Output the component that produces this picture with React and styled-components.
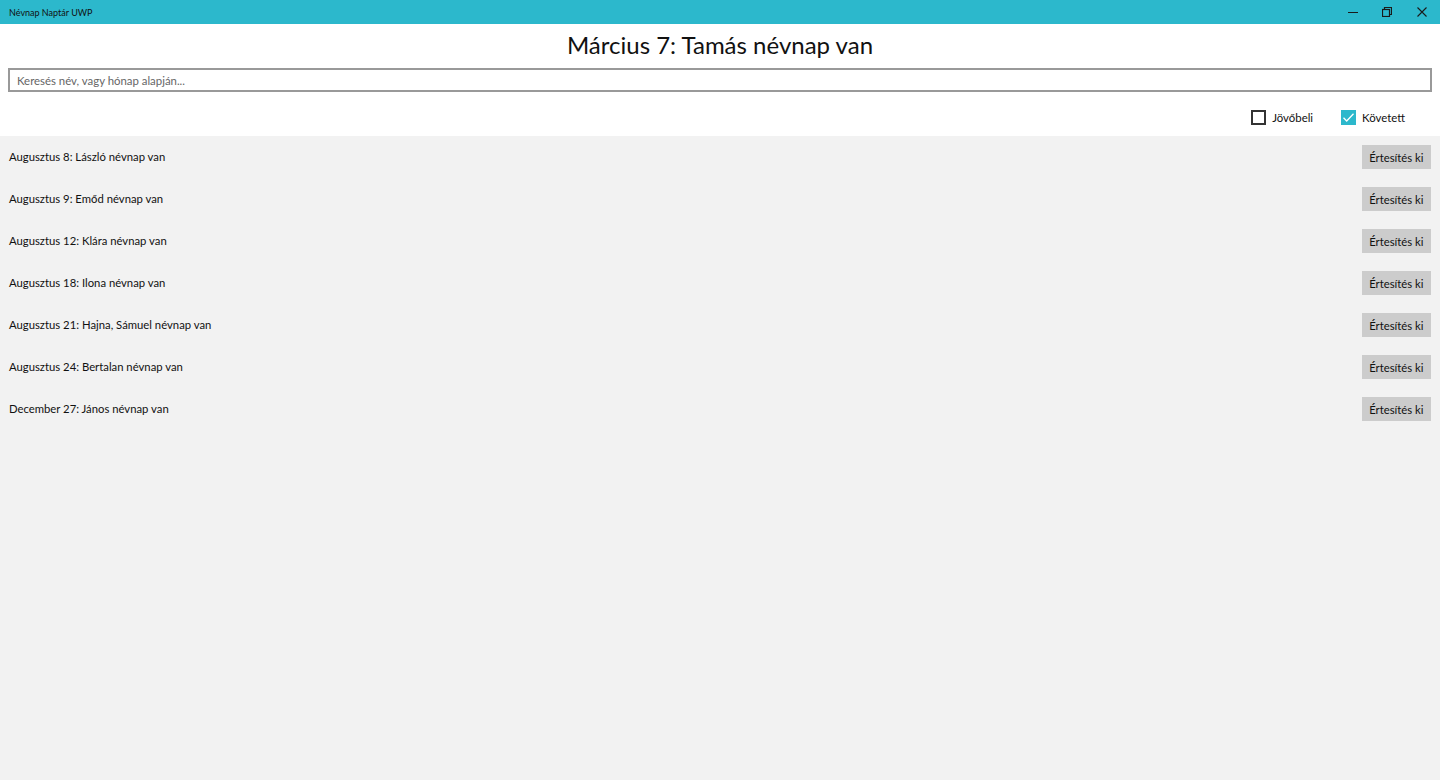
import React from 'react';
import styled, { createGlobalStyle } from 'styled-components';

const GlobalStyle = createGlobalStyle`
  html, body {
    margin: 0;
    padding: 0;
    height: 100%;
  }
  body {
    font-family: Lato, "Noto Sans", sans-serif;
    color: #000;
    overflow: hidden;
  }
  #root {
    height: 100%;
  }
`;

const namedays = [
  'Augusztus 8: László névnap van',
  'Augusztus 9: Emőd névnap van',
  'Augusztus 12: Klára névnap van',
  'Augusztus 18: Ilona névnap van',
  'Augusztus 21: Hajna, Sámuel névnap van',
  'Augusztus 24: Bertalan névnap van',
  'December 27: János névnap van',
];

const App = () => {
  return (
    <Window>
      <GlobalStyle />
      <TitleBar>
        <AppName>Névnap Naptár UWP</AppName>
        <WindowControls>
          <ControlButton aria-label="Minimize">
            <svg width="10" height="10" viewBox="0 0 10 10">
              <path d="M0 5.5h10" stroke="#1a1a1a" strokeWidth="1" />
            </svg>
          </ControlButton>
          <ControlButton aria-label="Restore">
            <svg width="10" height="10" viewBox="0 0 10 10" fill="none">
              <rect x="0.5" y="2.5" width="7" height="7" stroke="#1a1a1a" strokeWidth="1.2" />
              <path d="M2.5 2.5V0.5h7v7h-2" stroke="#1a1a1a" strokeWidth="1.2" />
            </svg>
          </ControlButton>
          <ControlButton aria-label="Close">
            <svg width="10" height="10" viewBox="0 0 10 10">
              <path d="M0.5 0.5l9 9M9.5 0.5l-9 9" stroke="#1a1a1a" strokeWidth="1.1" />
            </svg>
          </ControlButton>
        </WindowControls>
      </TitleBar>

      <Header>
        <Heading>Március 7: Tamás névnap van</Heading>
        <SearchBox placeholder="Keresés név, vagy hónap alapján..." />
        <FilterRow>
          <CheckLabel>
            <CheckBox $checked={false} />
            Jövőbeli
          </CheckLabel>
          <CheckLabel>
            <CheckBox $checked>
              <svg width="13" height="13" viewBox="0 0 13 13" fill="none">
                <path d="M1.5 6.8l3.2 3.2 6.8-7.2" stroke="#fff" strokeWidth="1.3" />
              </svg>
            </CheckBox>
            Követett
          </CheckLabel>
        </FilterRow>
      </Header>

      <List>
        {namedays.map((text) => (
          <Row key={text}>
            <RowText>{text}</RowText>
            <NotifyButton>Értesítés ki</NotifyButton>
          </Row>
        ))}
      </List>
    </Window>
  );
};

const Window = styled.div`
  height: 100%;
  display: flex;
  flex-direction: column;
  background: #f2f2f2;
`;

const TitleBar = styled.div`
  height: 24px;
  flex-shrink: 0;
  display: flex;
  align-items: center;
  justify-content: space-between;
  background: #2cb8cc;
`;

const AppName = styled.div`
  padding-left: 9px;
  font-size: 9px;
  color: #111;
`;

const WindowControls = styled.div`
  display: flex;
  height: 100%;
  padding-right: 1px;
`;

const ControlButton = styled.div`
  width: 34.5px;
  height: 100%;
  display: flex;
  align-items: center;
  justify-content: center;
`;

const Header = styled.div`
  background: #fff;
  display: flex;
  flex-direction: column;
  padding: 0 8px;
`;

const Heading = styled.h1`
  margin: 0;
  height: 44px;
  line-height: 41px;
  text-align: center;
  font-size: 24px;
  font-weight: 400;
  color: #111;
`;

const SearchBox = styled.input`
  box-sizing: border-box;
  height: 24px;
  width: 100%;
  border: 2px solid #999;
  padding: 0 7px;
  font-family: inherit;
  font-size: 11.4px;
  color: #111;
  outline: none;

  &::placeholder {
    color: #666;
  }
`;

const FilterRow = styled.div`
  box-sizing: border-box;
  height: 44px;
  padding-top: 6px;
  display: flex;
  justify-content: flex-end;
  align-items: center;
  gap: 28px;
  padding-right: 27px;
`;

const CheckLabel = styled.label`
  display: flex;
  align-items: center;
  gap: 6px;
  font-size: 11.4px;
  color: #111;
`;

const CheckBox = styled.span`
  box-sizing: border-box;
  width: 15px;
  height: 15px;
  display: flex;
  align-items: center;
  justify-content: center;
  border: ${(p) => (p.$checked ? 'none' : '2px solid #333')};
  background: ${(p) => (p.$checked ? '#2cb8cc' : '#fff')};
`;

const List = styled.div`
  flex: 1;
  display: flex;
  flex-direction: column;
  padding-top: 9px;
`;

const Row = styled.div`
  height: 42px;
  box-sizing: border-box;
  display: flex;
  align-items: flex-start;
  justify-content: space-between;
  padding: 0 9px;
`;

const RowText = styled.div`
  font-size: 11.3px;
  line-height: 24px;
  color: #111;
`;

const NotifyButton = styled.button`
  height: 24px;
  padding: 0 7.5px;
  border: none;
  background: #cccccc;
  font-family: inherit;
  font-size: 11.3px;
  color: #111;
`;

export default App;
